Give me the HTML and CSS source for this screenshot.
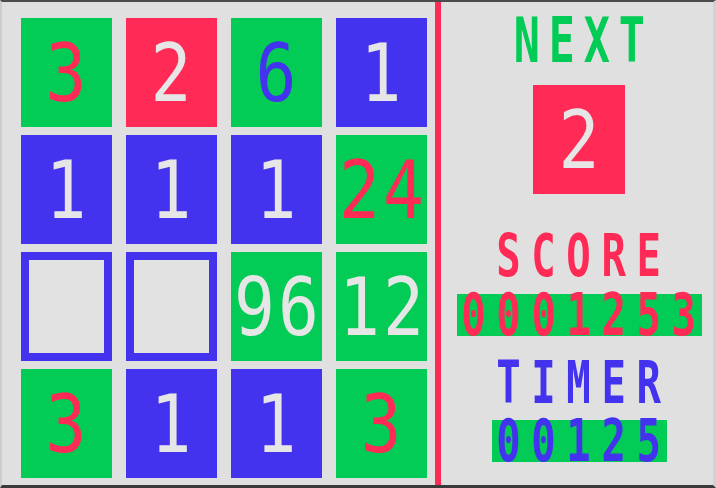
FILE: index.html
```html
<!DOCTYPE html>
<html>
<head>
<meta charset="utf-8">
<link rel="stylesheet" href="styles.css">
</head>
<body>
<div class="screen">
  <div class="board">
    <div class="grid">
      <div class="tile green"><span class="num red-t">3</span></div>
      <div class="tile red"><span class="num white-t">2</span></div>
      <div class="tile green"><span class="num blue-t">6</span></div>
      <div class="tile blue"><span class="num white-t">1</span></div>

      <div class="tile blue"><span class="num white-t">1</span></div>
      <div class="tile blue"><span class="num white-t">1</span></div>
      <div class="tile blue"><span class="num white-t">1</span></div>
      <div class="tile green"><span class="num two red-t">24</span></div>

      <div class="tile empty"></div>
      <div class="tile empty"></div>
      <div class="tile green"><span class="num two white-t">96</span></div>
      <div class="tile green"><span class="num two white-t">12</span></div>

      <div class="tile green"><span class="num red-t">3</span></div>
      <div class="tile blue"><span class="num white-t">1</span></div>
      <div class="tile blue"><span class="num white-t">1</span></div>
      <div class="tile green"><span class="num red-t">3</span></div>
    </div>
  </div>
  <div class="divider"></div>
  <div class="panel">
    <div class="label label-next"><span class="squeeze">NEXT</span></div>
    <div class="tile red next-tile"><span class="num white-t">2</span></div>
    <div class="label label-score"><span class="squeeze">SCORE</span></div>
    <div class="counter score-bar"><span class="squeeze">0001253</span></div>
    <div class="label label-timer"><span class="squeeze">TIMER</span></div>
    <div class="counter timer-bar"><span class="squeeze">00125</span></div>
  </div>
</div>
</body>
</html>
```
FILE: styles.css
```css
html, body {
  margin: 0;
  padding: 0;
  background: #e0e0e0;
}

.screen {
  width: 716px;
  height: 488px;
  box-sizing: border-box;
  border-top: 2px solid #4b4b4b;
  border-bottom: 3px solid #3a3a3a;
  border-left: 2px solid #cdcdcd;
  border-right: 3px solid #d2d2d2;
  background: #e0e0e0;
  display: flex;
  overflow: hidden;
}

.board {
  padding: 16px 8px 0 19px;
}

.grid {
  display: grid;
  grid-template-columns: repeat(4, 91px);
  grid-auto-rows: 109px;
  column-gap: 14px;
  row-gap: 8px;
}

.tile {
  width: 91px;
  height: 109px;
  box-sizing: border-box;
  display: flex;
  align-items: center;
  justify-content: center;
}

.green { background: #02cc55; }
.red { background: #ff2a55; }
.blue { background: #4433ee; }

.empty {
  border: 8px solid #4433ee;
  background: #e2e2e2;
}

.num {
  display: inline-block;
  font-family: "DejaVu Sans Mono", monospace;
  font-size: 80px;
  line-height: 105px;
  padding-top: 2px;
  transform: scaleX(0.85);
  transform-origin: center;
  white-space: nowrap;
}

.num.two {
  letter-spacing: 3.6px;
  padding-left: 3.6px;
}

.red-t { color: #ff2a55; }
.white-t { color: #e6e6e6; }
.blue-t { color: #4433ee; }

.divider {
  width: 6px;
  background: #ff2a55;
  flex: none;
}

.panel {
  flex: 1;
  display: flex;
  flex-direction: column;
  align-items: center;
  padding: 16px 0 0 4px;
}

.label {
  font-family: "DejaVu Sans Mono", monospace;
  font-weight: bold;
  display: flex;
  justify-content: center;
  width: 260px;
}

.squeeze {
  display: inline-block;
  transform: scaleX(0.7);
  transform-origin: center;
  white-space: nowrap;
}

.label-next {
  color: #02cc55;
  font-size: 62px;
  line-height: 45px;
  height: 45px;
}
.label-next .squeeze {
  letter-spacing: 12.7px;
  padding-left: 12.7px;
}

.next-tile {
  margin-top: 22px;
  width: 92px;
}

.label-score, .label-timer {
  font-size: 58px;
  line-height: 42px;
  height: 42px;
}
.label-score .squeeze, .label-timer .squeeze,
.counter .squeeze {
  letter-spacing: 15.1px;
  padding-left: 15.1px;
}

.label-score {
  color: #ff2a55;
  margin-top: 41px;
}

.label-timer {
  color: #4433ee;
  margin-top: 26px;
}

.counter {
  background: #02cc55;
  height: 42px;
  display: flex;
  justify-content: center;
  font-family: "DejaVu Sans Mono", monospace;
  font-weight: bold;
  font-size: 58px;
  line-height: 42px;
}

.score-bar {
  width: 245px;
  color: #ff2a55;
  margin-top: 17px;
}

.timer-bar {
  width: 175px;
  color: #4433ee;
  margin-top: 16px;
}
```
